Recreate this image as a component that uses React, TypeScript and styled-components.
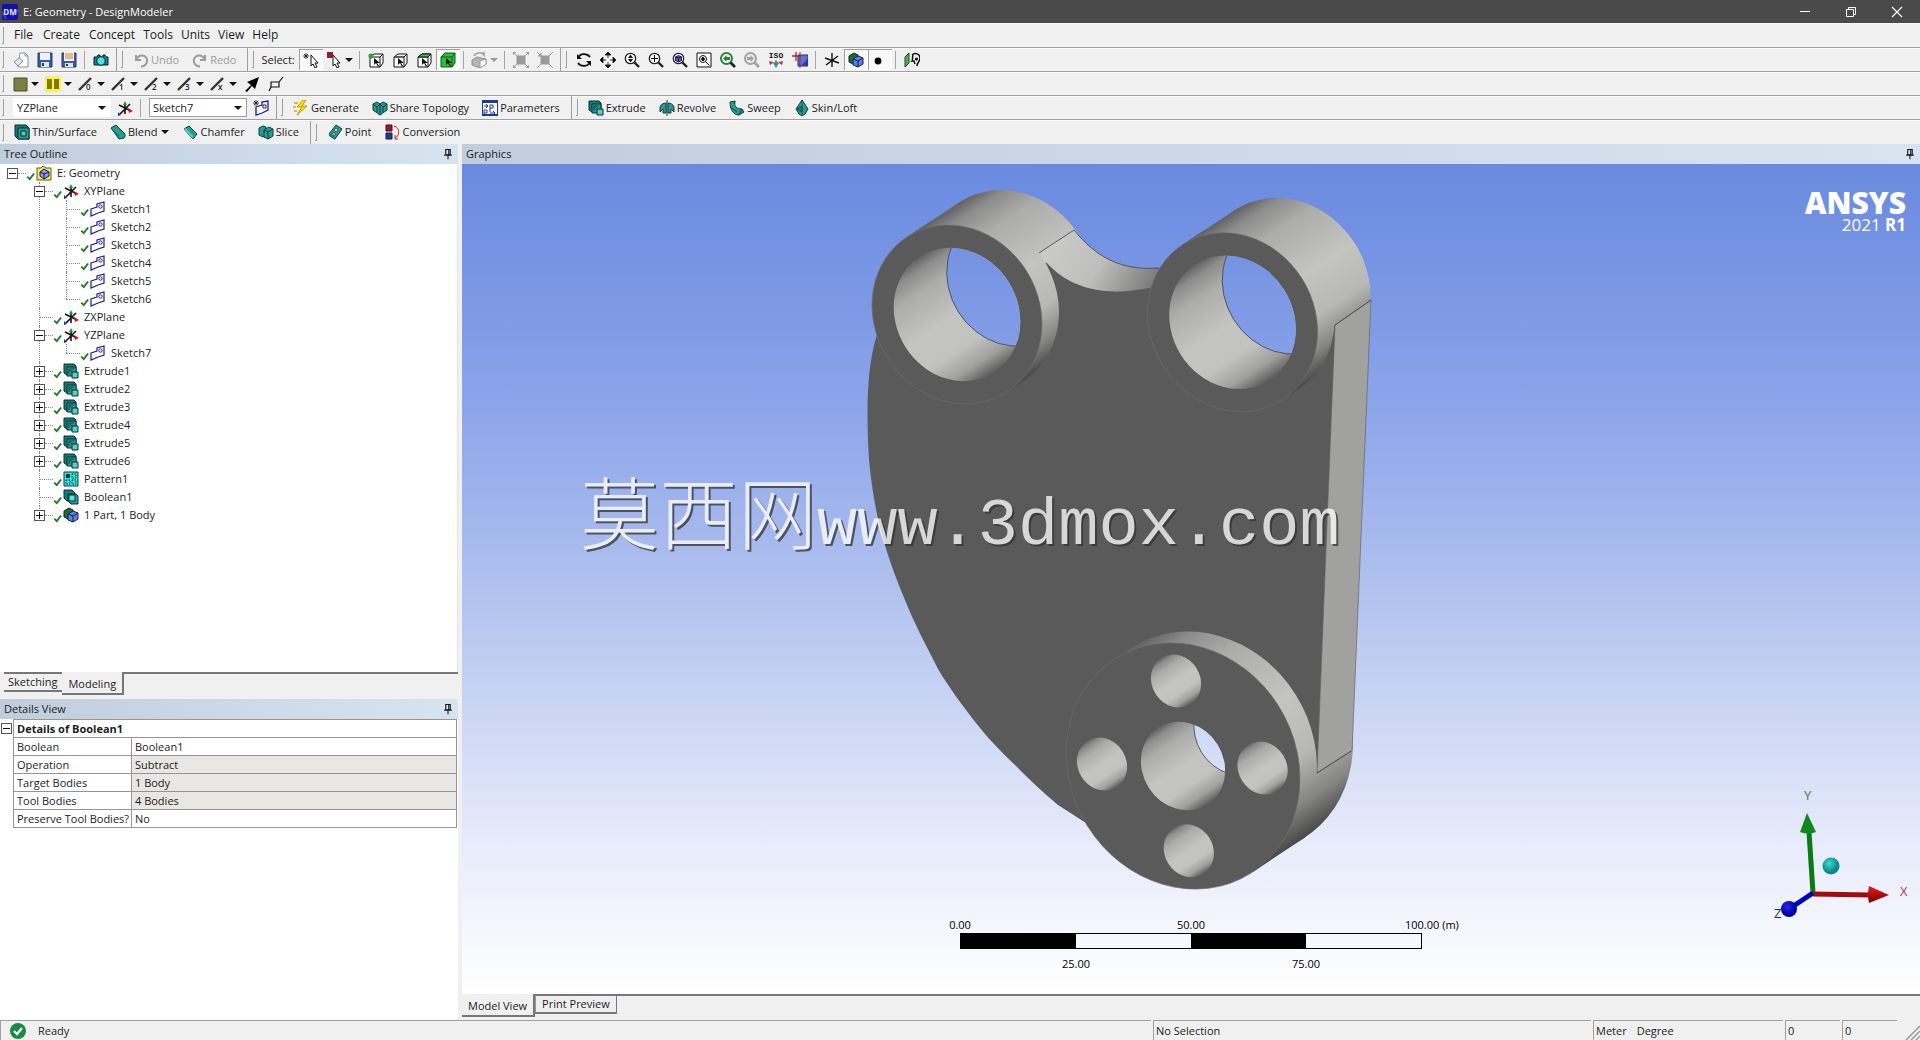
import React from 'react';
import styled, { createGlobalStyle, css } from 'styled-components';

const Global = createGlobalStyle`
  * { box-sizing: border-box; }
  html, body, #root { height: 100%; margin: 0; }
  body { font: 11px/18px "Open Sans", "Noto Sans", "Noto Sans CJK SC", sans-serif; color: #1c1c1c; background: #f0f0f0; overflow: hidden; }
  button, select { font: inherit; color: inherit; }
  ul { list-style: none; margin: 0; padding: 0; }
`;

/* ---------- icons ---------- */

const teal = '#2a9a94';
const deep = '#147a76';
const bright = '#4fd0c8';

const cubeFrame = <path d="M2 5l4-3h9v9l-3 4H2zM2 5h10v10M12 5l3-3" fill="#fff" stroke="#111" />;
const pointer = <path d="M6 6v7l2-2 2 4 1-1-2-3h3z" fill="#111" />;
const lens = (c: string) => (
  <>
    <circle cx="6.500" cy="6.500" r="5.200" fill="#fff" stroke={c} strokeWidth="1.300" />
    <path d="M10.500 10.500L15 15" stroke={c} strokeWidth="2.400" />
  </>
);
const edgeLine = (t: string) => (
  <>
    <path d="M1 14L13 2" stroke="#333" strokeWidth="2.400" />
    <text x="8" y="14" fontSize="8" fontWeight="600" fontFamily="Open Sans, sans-serif" fill="#222">{t}</text>
  </>
);
const extrude = (
  <>
    <path d="M1 1h10l2 2v9H4L1 10z" fill={deep} stroke="#08302f" />
    <path d="M4 4h9v9H4z" fill={teal} stroke="#08302f" />
    <path d="M6 11V6h5" fill="none" stroke="#0b4442" />
    <path d="M9 9h6v6H9z" fill={bright} stroke="#08302f" />
    <path d="M7 7l3 3" stroke="#08302f" />
  </>
);

const icons: Record<string, React.ReactNode> = {
  dm: (
    <>
      <rect width="16" height="16" rx="2" fill="#1212a8" />
      <path d="M0 8l4 7M10 12l6-6" stroke="#2f3fe6" strokeWidth="2" />
      <text x="8" y="11" textAnchor="middle" fontSize="8" fontWeight="700" fontFamily="Open Sans, sans-serif" fill="#dfe3ff">DM</text>
    </>
  ),
  fresh: (
    <>
      <path d="M7 1h5l3 3v11H5z" fill="#fdfdff" stroke="#8a8fa3" />
      <path d="M1 10l5-4 4 3-5 5z" fill="#e3e6f0" stroke="#8a8fa3" /><path d="M12 1v3h3" fill="none" stroke="#8a8fa3" />
    </>
  ),
  save: (
    <>
      <path d="M1 1h14v14H1z" fill="#3b5aa6" stroke="#26386e" />
      <path d="M3 1h10v7H3z" fill="#eef2fb" />
      <path d="M4 10h8v5H4z" fill="#dfe4ee" /><path d="M5 11h2v3H5z" fill="#26386e" />
    </>
  ),
  saveAs: (
    <>
      <path d="M1 1h14v14H1z" fill="#3b5aa6" stroke="#26386e" />
      <path d="M3 0h10v9H3z" fill="#f6efe2" /><path d="M4 2h8M4 4h8M4 6h8" stroke="#c98a4a" />
      <path d="M4 11h8v4H4z" fill="#dfe4ee" /><path d="M5 12h2v2H5z" fill="#26386e" />
    </>
  ),
  camera: (
    <>
      <path d="M1 5h3l1-2h2v2h3V3h2l1 2h2v8H1z" fill="#1c7f86" stroke="#08282b" />
      <circle cx="8" cy="9" r="4.200" fill="#49e3ea" stroke="#08282b" />
    </>
  ),
  undo: <path d="M3 3v5h5M3.500 7.500C5 3 11 2 13.500 6c2 4-1 8.500-5.500 8.500" fill="none" stroke="#9c9c9c" strokeWidth="2" />,
  redo: <path d="M13 3v5H8M12.500 7.500C11 3 5 2 2.500 6c-2 4 1 8.500 5.500 8.500" fill="none" stroke="#9c9c9c" strokeWidth="2" />,
  pick: (
    <>
      <path d="M8 3v11l2-2 2 4 2-1-2-4h3z" fill="#fff" stroke="#111" />
      <path d="M3 1v6M0 4h6M1 2l4 4M5 2L1 6" stroke="#111" strokeWidth=".8" />
    </>
  ),
  pickBox: (
    <>
      <path d="M7 3v11l2-2 2 4 2-1-2-4h3z" fill="#fff" stroke="#111" />
      <path d="M1 0h6v6H1z" fill="#8c1f2d" />
    </>
  ),
  selVertex: <>{cubeFrame}{pointer}<circle cx="3" cy="4" r="2.600" fill="#2fa33a" /></>,
  selEdge: <>{cubeFrame}{pointer}<path d="M2 5l10 0" stroke="#2f6a33" strokeWidth="1.600" /></>,
  selFace: <>{cubeFrame}<path d="M2 5l4-3h9l-3 3z" fill="#3cc94a" stroke="#111" />{pointer}</>,
  selBody: (
    <>
      <path d="M1 5l4-4h10v10l-3 4H1z" fill="#24c436" stroke="#0d5a18" />
      <path d="M1 5h11v10M12 5l3-4" fill="none" stroke="#0d5a18" />{pointer}
    </>
  ),
  greyCube: (
    <>
      <path d="M1 8l5-3 9 2v5l-6 4-8-3z" fill="#b5b5b5" stroke="#8f8f8f" />
      <path d="M9 9l6-2v5l-6 4z" fill="#fff" stroke="#9a9a9a" /><path d="M3 4c2-4 8-4 10-1v-3" fill="none" stroke="#9a9a9a" strokeWidth="1.500" />
    </>
  ),
  expandSel: <path d="M4 4h8v8H4zM0 3V0h3M13 0h3v3M16 13v3h-3M3 16H0v-3M1 1l3 3M15 1l-3 3M15 15l-3-3M1 15l3-3" fill="#9a9a9a" stroke="#9a9a9a" />,
  shrinkSel: <path d="M4 4h8v8H4zM0 0l4 4M16 0l-4 4M16 16l-4-4M0 16l4-4M1 4h3V1" fill="#9a9a9a" stroke="#9a9a9a" />,
  rotate: (
    <>
      <path d="M2 6c2-5 9-5 12-1M14 10c-2 5-9 5-12 1" fill="none" stroke="#111" strokeWidth="1.800" />
      <path d="M1 2v5h5zM15 14V9h-5z" fill="#111" />
    </>
  ),
  pan: <path d="M8 0l3 3H5zM8 16l3-3H5zM0 8l3-3v6zM16 8l-3-3v6zM8 3v3M8 10v3M3 8h3M10 8h3" fill="#111" stroke="#111" strokeWidth=".8" />,
  zoom: <>{lens('#222')}<path d="M6.500 2.500L9 6H4zM6.500 10.500L9 7H4z" fill="#111" /></>,
  boxZoom: <>{lens('#222')}<path d="M6.500 3v7M3 6.500h7" stroke="#111" /></>,
  fit: <>{lens('#222')}<path d="M3.500 5l3-1.500 3 1.500v3.500l-3 1.500-3-1.500z" fill="#5a58b8" stroke="#1a1860" /><path d="M6.500 6v4M3.500 5l3 1 3-1" stroke="#1a1860" fill="none" /></>,
  magnifier: (
    <>
      <path d="M1 1h14v14H1z" fill="#fff" stroke="#111" />
      <circle cx="7" cy="7" r="3.500" fill="none" stroke="#111" /><path d="M9.500 9.500l4 4M7 5l1.500 2h-3zM5.500 7.500h3L7 9z" stroke="#111" />
    </>
  ),
  prevView: (
    <>
      <circle cx="6.500" cy="6.500" r="5.500" fill="#fff" stroke="#2c7f34" strokeWidth="2" />
      <path d="M10.500 10.500L15 15" stroke="#222" strokeWidth="2.600" /><path d="M3 6.500L6.500 3v2H10v3H6.500v2z" fill="#2c7f34" />
    </>
  ),
  nextView: (
    <>
      <circle cx="6.500" cy="6.500" r="5.500" fill="#eee" stroke="#a2a2a2" strokeWidth="2" />
      <path d="M10.500 10.500L15 15" stroke="#a2a2a2" strokeWidth="2.600" /><path d="M10 6.500L6.500 3v2H3v3h3.500v2z" fill="#a2a2a2" />
    </>
  ),
  iso: (
    <>
      <text x="8" y="6" textAnchor="middle" fontSize="8" fontWeight="700" fontFamily="Liberation Mono, monospace" fill="#111">ISO</text>
      <path d="M8 8v4M8 12l-6-3M8 12l6-3" stroke="#b33" strokeDasharray="2 1" /><path d="M5 11l3-2 3 2-3 5z" fill={teal} />
      <path d="M1 9l1 4 3-2zM15 9l-1 4-3-2z" fill="#a33" />
    </>
  ),
  lookAt: (
    <>
      <path d="M6 3h10v11H6z" fill="#5c74d6" stroke="#24306e" /><path d="M9 14l7-8v8z" fill="#2c3f9e" />
      <path d="M4 0v9M0 4h9" stroke="#a32a2a" strokeWidth="1.300" /><path d="M8 0v16" stroke="#a32a2a" />
    </>
  ),
  axes: <path d="M8 1v14M1 6l14 5M2 13l12-9" stroke="#111" strokeWidth="1.400" />,
  solid: (
    <>
      <path d="M1 4l5-3 4 2v6l-5 3-4-2z" fill="#1c6a3a" stroke="#0b2a18" />
      <path d="M5 7l5-3 5 2v6l-5 3-5-2z" fill="#5c7fe0" stroke="#12205c" /><path d="M5 7l5 2 5-3M10 9v6" fill="none" stroke="#12205c" />
    </>
  ),
  dot: <circle cx="6" cy="9" r="3.400" fill="#000" />,
  face: (
    <>
      <path d="M1 5l4-4v10l-4 4z" fill="#4fae54" stroke="#1a4a1c" />
      <path d="M8 3c3-3 8-1 8 3s-3 4-3 8M9 3c-1 3 0 5-1 6h2l1 3" fill="none" stroke="#111" strokeWidth="1.500" /><circle cx="12.500" cy="7" r="1.600" fill="#111" />
    </>
  ),
  swatch: <path d="M2 2h13v13H2z" fill="#7b7f45" stroke="#4c4f1e" />,
  swatch2: (
    <>
      <path d="M0 0h16v16H0z" fill="#fbf25a" />
      <path d="M2 3h5v10H2zM9 3h5v10H9z" fill="#7f7a00" />
    </>
  ),
  edge0: edgeLine('0'), edge1: edgeLine('1'), edge2: edgeLine('2'), edge3: edgeLine('3'), edgeX: edgeLine('x'),
  bigArrow: <path d="M1 15l6-6-4-3L15 1l-4 12-3-3-5 6z" fill="#000" />,
  flag: <path d="M1 15l2-4V6h8v5H3M11 6l4-5" fill="none" stroke="#111" strokeWidth="1.200" />,
  newPlane: (
    <>
      <path d="M8 14V4M2 5l12 6M3 14L13 4" stroke="#111" strokeWidth="1.600" />
      <path d="M6 5l2-4 2 4z" fill="#1b9a2e" /><path d="M11 8l5 3-4 2z" fill="#c02020" /><path d="M1 12l3 3-3 1z" fill="#22c" />
    </>
  ),
  newSketch: (
    <>
      <path d="M3 7l6-2V2l6-1v9l-6 3-6 2z" fill="#fff" stroke="#1c1c8c" strokeWidth="1.300" /><path d="M10 5h3v3h-3z" fill="none" stroke="#1c1c8c" />
      <path d="M3 0v6M0 3h6M1 1l4 4M5 1L1 5" stroke="#111" strokeWidth=".8" />
    </>
  ),
  generate: (
    <>
      <path d="M10 0L4 7h5l-5 8 10-9H9l4-6z" fill="#ffe000" stroke="#a08a00" strokeWidth=".8" />
      <path d="M1 3h4M0 7h3M1 11h3" stroke="#c9b400" strokeWidth="1.400" />
    </>
  ),
  share: (
    <>
      <path d="M1 4l4-2 3 2 3-2 4 2v6l-7 5-7-5z" fill={teal} stroke="#0b3f3d" />
      <path d="M1 4l4 3 3-3 3 3 4-3M8 4v11M5 7v5M11 7v5" fill="none" stroke="#0b3f3d" />
    </>
  ),
  params: (
    <>
      <path d="M0 1h16v14H0z" fill="#fff" stroke="#1d3a94" strokeWidth="2" /><path d="M0 1h16v2H0z" fill="#1d3a94" />
      <path d="M2 6h3M4 4l2 2-2 2M8 12V5h3v3H8M2 15v-5h3v3H2M8 13h5M11 11l2 2-2 2" fill="none" stroke="#1d3a94" />
    </>
  ),
  extrude,
  revolve: (
    <>
      <path d="M1 7c1-3 4-4 6-4v10H4V9L1 12zM15 7c-1-3-4-4-6-4v10h3V9l3 3z" fill={teal} stroke="#0b3f3d" />
      <path d="M8 0v16" stroke="#0b3f3d" />
    </>
  ),
  sweep: <path d="M1 2l5-1c-1 5 1 8 7 8l2 3-5 3C4 15 1 9 1 2zM6 1l-1 3M13 9l-3 6M3 8l5 4" fill={teal} stroke="#0b3f3d" />,
  loft: <><path d="M8 0l6 9-3 5-3 2-3-2-3-5z" fill={teal} stroke="#0b3f3d" /><path d="M8 0v16M8 6l-6 3 6 3z" fill={deep} stroke="#0b3f3d" strokeWidth=".6" /></>,
  thin: (
    <>
      <path d="M1 1h11l3 3v11H4l-3-3z" fill={deep} stroke="#08302f" />
      <path d="M4 4h11v11H4z" fill={teal} stroke="#08302f" /><path d="M7 7h5v5H7z" fill="#5fc4c0" stroke="#08302f" />
    </>
  ),
  blend: <><path d="M1 4l5-3 8 8c2 2 1 4 0 5l-5 1z" fill={teal} stroke="#0b3f3d" /><path d="M1 4l8 11v-4z" fill={deep} /></>,
  chamfer: <><path d="M2 5l5-3 8 8-4 5z" fill={teal} stroke="#0b3f3d" /><path d="M2 5l9 10v-3L4 4z" fill={bright} /></>,
  slice: (
    <>
      <path d="M1 4l4-2 3 1v8l-3 2-4-2z" fill={teal} stroke="#0b3f3d" />
      <path d="M6 6l5-3 4 2v7l-5 3-4-2z" fill={teal} stroke="#0b3f3d" /><path d="M6 6l4 2 5-3M10 8v7" fill="none" stroke="#0b3f3d" />
    </>
  ),
  point: (
    <>
      <path d="M2 10L9 1l6 4-7 10z" fill={teal} stroke="#0b3f3d" /><path d="M2 10l6 3v3l-6-4z" fill={deep} />
      <circle cx="9" cy="6" r="1.500" fill="#fff" stroke="#111" strokeWidth=".6" /><circle cx="7" cy="10" r="1.300" fill="#fff" stroke="#111" strokeWidth=".6" />
    </>
  ),
  conversion: (
    <>
      <path d="M1 1h6v6H1z" fill="#8c1f2d" stroke="#4a0d16" /><path d="M1 9h6v6H1z" fill="#1f3f8c" stroke="#0d1c4a" />
      <path d="M9 2c6 1 6 10 1 12M10 11v4h3" fill="none" stroke="#c22" />
    </>
  ),
  project: (
    <>
      <path d="M1 3h4l2-2 3 2h5v12H1z" fill="#f5e46a" stroke="#6b5b10" />
      <path d="M4 7l4-3 5 3v4l-5 3-4-3z" fill="#8d9be0" stroke="#161a4a" /><path d="M4 7l4 2 5-2M8 9v5" fill="none" stroke="#161a4a" />
    </>
  ),
  sketch: (
    <>
      <path d="M1 8l6-2V3l7-2v9l-6 2-7 3z" fill="#fff" stroke="#1c1c8c" strokeWidth="1.200" />
      <circle cx="10.500" cy="5.500" r="1.700" fill="none" stroke="#1c1c8c" />
    </>
  ),
  pattern: (
    <>
      <path d="M1 1h14v14H1z" fill="#3fe0e0" stroke="#063c3c" /><path d="M3 3h4v4H3z" fill="#063c3c" />
      <path d="M9 3h4v4H9zM3 9h4v4H3zM9 9h4v4H9z" fill="none" stroke="#063c3c" strokeDasharray="1.500 1" />
    </>
  ),
  boolean: (
    <>
      <path d="M1 1h8l3 3v8H4L1 9z" fill={deep} stroke="#08302f" /><path d="M5 5h8l2 2v8H8l-3-3z" fill={teal} stroke="#08302f" />
      <path d="M6 6h6v6H6z" fill="#5be3dc" stroke="#08302f" />
    </>
  ),
  check: <path d="M2 9l4 4 7-9" fill="none" stroke="#1f7a26" strokeWidth="3" />,
  pin: <path d="M5 2h6v7H5zM9 2v7M3 9.500h10M8 10v5" fill="none" stroke="#111" strokeWidth="1.400" />,
  ready: (
    <>
      <circle cx="8" cy="8" r="8" fill="#1b8a43" /><path d="M4 8l3 3 5-6" fill="none" stroke="#fff" strokeWidth="2.200" />
    </>
  ),
  minimize: <path d="M3 7.500h10" stroke="#fff" />,
  restore: <path d="M3.500 5.500h7v7h-7zM5.500 5.500v-2h7v7h-2" fill="none" stroke="#fff" />,
  close: <path d="M3 3l10 10M13 3L3 13" stroke="#fff" strokeWidth="1.200" />,
};

const Glyph = styled.svg<{ $size?: number }>`
  display: block;
  flex: none;
  width: ${p => p.$size ?? 16}px;
  height: ${p => p.$size ?? 16}px;
`;
const Icon = ({ name, size }: { name: string; size?: number }) => (
  <Glyph viewBox="0 0 16 16" $size={size} aria-hidden="true">{icons[name]}</Glyph>
);

/* ---------- window frame ---------- */

const Window = styled.div`
  display: flex;
  flex-direction: column;
  height: 100vh;
`;
const TitleBar = styled.header`
  display: flex;
  align-items: center;
  gap: 5px;
  height: 23px;
  padding-left: 2px;
  background: #4a4a4a;
  color: #fff;
`;
const Title = styled.h1`
  flex: 1;
  margin: 0;
  font-size: 11px;
  font-weight: 400;
`;
const WindowButtons = styled.div`
  display: flex;
`;
const WindowButton = styled.button`
  display: grid;
  place-items: center;
  width: 46px;
  height: 20px;
  padding: 0;
  border: 0;
  background: none;
`;

const Bar = styled.div<{ $last?: boolean }>`
  display: flex;
  align-items: center;
  height: 24px;
  background: #f0f0f0;
  border-bottom: ${p => (p.$last ? '0' : '1px solid #a0a0a0')};
  box-shadow: inset 0 1px #fafafa;
`;
const MenuBar = styled(Bar)`
  height: 25px;
`;
const Group = styled.div<{ $open?: boolean }>`
  display: flex;
  align-items: center;
  height: 23px;
  margin-right: 2px;
  padding-right: 3px;
  border-right: ${p => (p.$open ? '0' : '1px solid #a0a0a0')};
`;
const Grip = styled.span`
  width: 2px;
  height: 17px;
  margin: 0 5px 0 2px;
  border-right: 1px solid #a0a0a0;
  border-bottom: 1px solid #a0a0a0;
`;
const Rule = styled.span`
  width: 1px;
  height: 18px;
  margin: 0 4px 0 3px;
  background: #a6a6a6;
`;
const MenuButton = styled.button`
  padding: 0 5px;
  border: 0;
  background: none;
  font-size: 12px;
  &:nth-of-type(n + 3) { padding: 0 4px; }
`;
const ToolButton = styled.button<{ $on?: boolean; $wide?: boolean }>`
  display: flex;
  align-items: center;
  justify-content: center;
  gap: 3px;
  width: ${p => (p.$wide ? 33 : 24)}px;
  height: 21px;
  padding: 0;
  border: 0;
  background: none;
  ${p => p.$on && css`
    background: #f9f9f9;
    box-shadow: inset 1px 1px #a0a0a0, inset -1px -1px #fff;
  `}
`;
const TextButton = styled.button<{ $dim?: boolean }>`
  display: flex;
  align-items: center;
  gap: 2px;
  height: 21px;
  padding: 0 8px 0 5px;
  border: 0;
  background: none;
  white-space: nowrap;
  color: ${p => (p.$dim ? '#9c9c9c' : '#1c1c1c')};
`;
const Caret = styled.span<{ $dim?: boolean }>`
  flex: none;
  border: 4px solid transparent;
  border-top-color: ${p => (p.$dim ? '#9a9a9a' : '#111')};
  border-bottom: 0;
`;
const SelectLabel = styled.span`
  padding: 0 4px 0 2px;
`;
const Picker = styled.label<{ $framed?: boolean }>`
  display: flex;
  align-items: center;
  width: 98px;
  height: 19px;
  margin: 0 2px 0 4px;
  padding-right: 4px;
  background: #fff;
  border: ${p => (p.$framed ? '1px solid #a0a0a0' : '1px solid #fff')};
  select {
    flex: 1;
    min-width: 0;
    height: 17px;
    padding: 0 3px;
    border: 0;
    outline: 0;
    appearance: none;
    background: #fff;
    font-size: 11px;
    line-height: 17px;
  }
`;

type Tool = { icon: string; name: string; drop?: boolean; on?: boolean; dim?: boolean };
const Tools = ({ items }: { items: (Tool | '|')[] }) => (
  <>
    {items.map((t, i) =>
      t === '|' ? <Rule key={i} /> : (
        <ToolButton key={i} type="button" aria-label={t.name} $on={t.on} $wide={t.drop}>
          <Icon name={t.icon} />
          {t.drop && <Caret $dim={t.dim} />}
        </ToolButton>
      ))}
  </>
);
const Actions = ({ items }: { items: { icon: string; name: string; drop?: boolean; dim?: boolean }[] }) => (
  <>
    {items.map(t => (
      <TextButton key={t.name} type="button" $dim={t.dim} disabled={t.dim}>
        <Icon name={t.icon} />
        {t.name}
        {t.drop && <><span /><Caret /></>}
      </TextButton>
    ))}
  </>
);

/* ---------- panels ---------- */

const Workspace = styled.main`
  flex: 1;
  display: flex;
  gap: 4px;
  min-height: 0;
`;
const Side = styled.aside`
  display: flex;
  flex-direction: column;
  width: 458px;
`;
const PanelHead = styled.h2`
  display: flex;
  align-items: center;
  justify-content: space-between;
  flex: none;
  height: 20px;
  margin: 0;
  padding: 0 4px;
  font-size: 11px;
  font-weight: 400;
  background: linear-gradient(90deg, #bfcddd, #d6e4f2);
`;
const TreeBox = styled.div`
  flex: none;
  height: 508px;
  background: #fff;
  border-right: 1px solid #e3e3e3;
`;
const Branch = styled.ul`
  ul { margin-left: 27px; }
`;
const Leaf = styled.li<{ $root?: boolean }>`
  position: relative;
  ${p => !p.$root && css`
    &::before {
      content: '';
      position: absolute;
      top: 0;
      left: 12px;
      height: 100%;
      border-left: 1px dotted #888;
    }
    &:last-child::before { height: 9px; }
  `}
`;
const LeafRow = styled.div`
  display: flex;
  align-items: center;
  height: 18px;
`;
const Twig = styled.span<{ $box?: boolean }>`
  flex: none;
  width: 26px;
  display: flex;
  align-items: center;
  padding-left: ${p => (p.$box ? 7 : 12)}px;
  &::after { content: ''; flex: 1; border-top: 1px dotted #888; }
`;
const Expander = styled.button`
  position: relative;
  display: grid;
  place-items: center;
  width: 11px;
  height: 11px;
  padding: 0;
  border: 1px solid #555;
  background: #fff;
  svg { display: block; }
`;
const Tick = styled.span`
  width: 10px;
  padding-top: 6px;
`;
const LeafName = styled.span`
  padding-left: 5px;
`;
const PlusMinus = ({ open }: { open: boolean }) => (
  <svg width="9" height="9" viewBox="0 0 9 9" aria-hidden="true"><path d={open ? 'M1 4.500h7' : 'M1 4.500h7M4.500 1v7'} stroke="#111" /></svg>
);

type Node = { name: string; icon: string; kids?: Node[] };
const tree: Node = {
  name: 'E: Geometry', icon: 'project', kids: [
    { name: 'XYPlane', icon: 'newPlane', kids: [1, 2, 3, 4, 5, 6].map(n => ({ name: `Sketch${n}`, icon: 'sketch' })) },
    { name: 'ZXPlane', icon: 'newPlane' },
    { name: 'YZPlane', icon: 'newPlane', kids: [{ name: 'Sketch7', icon: 'sketch' }] },
    ...[1, 2, 3, 4, 5, 6].map(n => ({ name: `Extrude${n}`, icon: 'extrude', kids: [] })),
    { name: 'Pattern1', icon: 'pattern' },
    { name: 'Boolean1', icon: 'boolean' },
    { name: '1 Part, 1 Body', icon: 'solid', kids: [] },
  ],
};
const TreeNode = ({ node, root }: { node: Node; root?: boolean }) => {
  const open = !!node.kids?.length;
  return (
    <Leaf $root={root}>
      <LeafRow>
        <Twig $box={!!node.kids}>
          {node.kids && (
            <Expander type="button" aria-label={open ? 'Collapse' : 'Expand'}><PlusMinus open={open} /></Expander>
          )}
        </Twig>
        <Tick><Icon name="check" size={10} /></Tick>
        <Icon name={node.icon} />
        <LeafName>{node.name}</LeafName>
      </LeafRow>
      {open && <ul>{node.kids!.map(k => <TreeNode key={k.name} node={k} />)}</ul>}
    </Leaf>
  );
};

const TabStrip = styled.div<{ $side?: boolean }>`
  display: flex;
  align-items: flex-start;
  flex: none;
  height: ${p => (p.$side ? 27 : 26)}px;
  padding-left: ${p => (p.$side ? 4 : 0)}px;
  &::after { content: ''; flex: 1; border-top: 2px solid #777; }
`;
const Tab = styled.button<{ $active?: boolean }>`
  height: ${p => (p.$active ? 23 : 20)}px;
  padding: ${p => (p.$active ? '3px 6px 0' : '0 6px')};
  border: 0 solid #777;
  border-width: ${p => (p.$active ? '0 2px 2px 0' : '2px 1px 2px 0')};
  border-left: ${p => (p.$active ? '0' : '1px solid #999')};
  background: #f0f0f0;
  line-height: 16px;
  white-space: nowrap;
`;
const SketchTab = styled(Tab)`
  padding: 0 5px 0 4px;
  border-left: 0;
  border-right: 0;
`;

const Details = styled.div`
  flex: 1;
  background: #fff;
`;
const DetailsRow = styled.div`
  display: flex;
  align-items: flex-start;
`;
const Gutter = styled.div`
  flex: none;
  width: 13px;
  padding: 4px 0 0 1px;
`;
const Table = styled.table`
  width: 100%;
  border-collapse: collapse;
  table-layout: fixed;
  margin-right: 1px;
  th, td {
    height: 18px;
    padding: 0 3px;
    border: 1px solid #959595;
    line-height: 17px;
    text-align: left;
    font-weight: 400;
    white-space: nowrap;
  }
  thead th { font-weight: 700; }
`;
const NameCol = styled.col`
  width: 118px;
`;
const Value = styled.td<{ $shade?: boolean }>`
  background: ${p => (p.$shade ? '#e8e7e3' : '#fff')};
`;
const details: [string, string, boolean][] = [
  ['Boolean', 'Boolean1', false],
  ['Operation', 'Subtract', true],
  ['Target Bodies', '1 Body', true],
  ['Tool Bodies', '4 Bodies', true],
  ['Preserve Tool Bodies?', 'No', false],
];

/* ---------- graphics view ---------- */

const View = styled.section`
  flex: 1;
  display: flex;
  flex-direction: column;
  min-width: 0;
`;
const Canvas = styled.div`
  position: relative;
  flex: 1;
  min-height: 0;
  overflow: hidden;
  background: linear-gradient(#698adf, #8da5ea 30%, #b9c8f0 56%, #e4e9fa 80%, #fff);
`;
const Model = styled.svg`
  display: block;
  width: 100%;
  height: 100%;
`;
const Watermark = styled.div`
  position: absolute;
  left: 118px;
  top: 50%;
  display: flex;
  align-items: baseline;
  margin-top: -114px;
  color: #fff;
  opacity: 0.76;
  line-height: 90px;
  white-space: nowrap;
  text-shadow: 2px 2px 0 #333;
`;
const Han = styled.span`
  font-family: "Noto Sans CJK SC", sans-serif;
  font-size: 79px;
  font-weight: 300;
`;
const Latin = styled.span`
  font-family: "Liberation Mono", monospace;
  font-size: 67px;
`;
const Brand = styled.div`
  position: absolute;
  top: 23px;
  right: 14px;
  color: #fff;
  text-align: right;
`;
const BrandName = styled.div`
  font-size: 30px;
  font-weight: 800;
  line-height: 31px;
`;
const Release = styled.div`
  font-size: 17px;
  line-height: 14px;
`;
const Scale = styled.div`
  position: absolute;
  bottom: 22px;
  left: 50%;
  width: 462px;
  margin-left: -231px;
  font-size: 11px;
  line-height: 16px;
  color: #000;
`;
const Marks = styled.div<{ $inset?: boolean }>`
  display: flex;
  justify-content: space-between;
  height: 16px;
  padding: 0 ${p => (p.$inset ? 116 : 0)}px;
`;
const Mark = styled.span`
  display: flex;
  justify-content: center;
  width: 0;
  white-space: pre;
`;
const EndMark = styled(Mark)`
  justify-content: flex-start;
  text-indent: -17px;
`;
const Blocks = styled.div`
  display: grid;
  grid-template-columns: repeat(4, 1fr);
  height: 16px;
  margin-bottom: 7px;
  border: 1px solid #000;
  span:nth-child(odd) { background: #000; }
`;
const Triad = styled.svg`
  position: absolute;
  right: 4px;
  bottom: 68px;
  width: 144px;
  height: 144px;
  font-family: "Open Sans", sans-serif;
  font-size: 13px;
`;

const ring = { rx: 92.2, ry: 82 };
const bore = { rx: 68.8, ry: 61 };
const tilt = 58;
const cos = Math.cos((tilt * Math.PI) / 180);
const sin = Math.sin((tilt * Math.PI) / 180);
const oval = (x: number, y: number, rx: number, ry: number) => {
  const ax = rx * cos;
  const ay = rx * sin;
  return `M${x - ax} ${y - ay}A${rx} ${ry} ${tilt} 1 1 ${x + ax} ${y + ay}A${rx} ${ry} ${tilt} 1 1 ${x - ax} ${y - ay}z`;
};
const Oval = ({ x, y, rx, ry, ...rest }: { x: number; y: number; rx: number; ry: number } & React.SVGProps<SVGPathElement>) => (
  <path d={oval(x, y, rx, ry)} {...rest} />
);
/* Outer wall of a boss, from its front ring back along the extrusion direction. */
const Wall = ({ x, y, k, dx, dy, fill }: { x: number; y: number; k: number; dx: number; dy: number; fill: string }) => {
  const tx = 50.4 * k;
  const ty = 77.2 * k;
  return (
    <g fill={fill}>
      <Oval x={x + dx} y={y + dy} rx={ring.rx * k} ry={ring.ry * k} />
      <path d={`M${x - tx} ${y - ty}l${dx} ${dy}L${x + tx + dx} ${y + ty + dy}l${-dx} ${-dy}z`} />
    </g>
  );
};
/* Shading runs square to the extrusion direction. */
const Shade = ({ id, x, y, r, inner }: { id: string; x: number; y: number; r: number; inner?: boolean }) => (
  <linearGradient id={id} gradientUnits="userSpaceOnUse" x1={x - 0.551 * r} y1={y - 0.835 * r} x2={x + 0.551 * r} y2={y + 0.835 * r}>
    <stop offset="0" stopColor="#626262" />
    <stop offset=".08" stopColor="#8c8c8c" />
    <stop offset=".22" stopColor="#acacab" />
    <stop offset=".5" stopColor="#c4c4c3" />
    <stop offset=".72" stopColor={inner ? '#c2c2c1' : '#b8b8b7'} />
    <stop offset=".88" stopColor={inner ? '#a0a09f' : '#858584'} />
    <stop offset="1" stopColor={inner ? '#5c5c5c' : '#484848'} />
  </linearGradient>
);

const bosses = [
  { id: 'a', x: 957, y: 314.5, k: 1, h: bore },
  { id: 'b', x: 1232.5, y: 322.3, k: 1, h: bore },
  { id: 'c', x: 1183, y: 766, k: 1.376, h: { rx: 45.6, ry: 40.6 } },
];
const bolts = [[1102, 764], [1176, 681], [1262.6, 768], [1188.8, 850.7]];
const metal = '#5a5a5a';

const Part = () => (
  <Model viewBox="462 164 1458 830" role="img" aria-label="Bracket">
    <defs>
      {bosses.map(b => <Shade key={b.id} id={`wall-${b.id}`} x={b.x} y={b.y} r={92.2 * b.k} />)}
      {bosses.map(b => <Shade key={b.id} id={`bore-${b.id}`} x={b.x} y={b.y} r={b.h.rx} inner />)}
      {bolts.map(([x, y], i) => <Shade key={i} id={`bolt-${i}`} x={x} y={y} r={27.3} inner />)}
      <linearGradient id="saddle" gradientUnits="userSpaceOnUse" x1="1060" y1="230" x2="1160" y2="290">
        <stop offset="0" stopColor="#cacac9" /><stop offset=".45" stopColor="#bebebd" /><stop offset="1" stopColor="#707070" />
      </linearGradient>
      {bosses.map(b => (
        <clipPath key={b.id} id={`clip-${b.id}`}><Oval x={b.x} y={b.y} {...b.h} /></clipPath>
      ))}
      <mask id="through" maskUnits="userSpaceOnUse" x="462" y="164" width="1458" height="830">
        <rect x="462" y="164" width="1458" height="830" fill="#fff" />
        {bosses.map(b => (
          <g key={b.id} clipPath={`url(#clip-${b.id})`}><Oval x={b.x + 53} y={b.y - 35} {...b.h} fill="#000" /></g>
        ))}
      </mask>
    </defs>
    <g mask="url(#through)">
      {bosses.map(b => <Wall key={b.id} x={b.x} y={b.y} k={b.k} dx={53} dy={-35} fill={`url(#wall-${b.id})`} />)}
      <path d="M1335 325L1371 300L1352 751L1317 773z" fill="#a1a1a0" stroke="#666" strokeWidth=".7" />
      <path d="M877 335C867 365 866 410 869 460C874 510 882 545 905 600C914 623 926 645 938 669C948 686 962 705 976 723C986 736 1000 751 1015 765C1028 778 1042 792 1058 805L1086 823L1183 880L1317 773L1335 325L1232 260L1152 285C1125 295 1080 297 1048 262L957 300z" fill={metal} />
      <path d="M1037 254L1074 230C1095 256 1120 271 1161 268L1164 284C1120 297 1075 295 1046 262z" fill="url(#saddle)" />
      {bosses.map(b => (
        <React.Fragment key={b.id}>
          <Wall x={b.x} y={b.y} k={b.k} dx={17} dy={-11.5} fill={`url(#wall-${b.id})`} />
          <Oval x={b.x} y={b.y} rx={ring.rx * b.k} ry={ring.ry * b.k} fill={metal} stroke="#6c6c6c" strokeWidth=".7" />
          <Oval x={b.x} y={b.y} {...b.h} fill={`url(#bore-${b.id})`} />
        </React.Fragment>
      ))}
      {bolts.map(([x, y], i) => <Oval key={i} x={x} y={y} rx={27.3} ry={24.2} fill={`url(#bolt-${i})`} />)}
    </g>
    <g fill="none" stroke="#4c4c4c" strokeWidth=".9">
      <path d="M1039 253L1074 230C1095 256 1120 271 1159 268M1335 325L1371 300M1317 773L1351 751" />
      {bosses.map(b => (
        <g key={b.id} clipPath={`url(#clip-${b.id})`}><Oval x={b.x + 53} y={b.y - 35} {...b.h} /></g>
      ))}
    </g>
  </Model>
);

const AxisTriad = () => (
  <Triad viewBox="1772 782 144 144" role="img" aria-label="Axes">
    <defs>
      <radialGradient id="ball" cx=".4" cy=".35"><stop offset="0" stopColor="#3fd9d0" /><stop offset="1" stopColor="#088a86" /></radialGradient>
      <radialGradient id="knob" cx=".4" cy=".35"><stop offset="0" stopColor="#2a2af0" /><stop offset="1" stopColor="#0000a0" /></radialGradient>
      <linearGradient id="red" x1="0" y1="0" x2="0" y2="1"><stop offset="0" stopColor="#e02020" /><stop offset="1" stopColor="#800000" /></linearGradient>
    </defs>
    <path d="M1813 893L1809 832" stroke="#0a7a14" strokeWidth="5" />
    <path d="M1807 813l9 19q-8 3-16 0z" fill="#0f8a1a" />
    <path d="M1813 894L1870 895" stroke="#a00d0d" strokeWidth="5" />
    <path d="M1889 895l-20-9q-2 9 0 17z" fill="url(#red)" />
    <path d="M1813 893L1789 909" stroke="#0000b8" strokeWidth="5" />
    <circle cx="1831" cy="866" r="8.500" fill="url(#ball)" />
    <text x="1774" y="918" fill="#222a66">Z</text>
    <circle cx="1789" cy="909" r="8" fill="url(#knob)" />
    <text x="1804" y="800" fill="#2a8a3a">Y</text>
    <text x="1900" y="896" fill="#c8323c">X</text>
  </Triad>
);

/* ---------- status bar ---------- */

const Status = styled.footer`
  display: flex;
  gap: 2px;
  flex: none;
  height: 20px;
`;
const Cell = styled.div<{ $width?: number }>`
  display: flex;
  align-items: center;
  gap: 10px;
  flex: ${p => (p.$width ? `0 0 ${p.$width}px` : '1')};
  padding-left: 2px;
  border-top: 1px solid #a0a0a0;
  border-left: 1px solid #a0a0a0;
`;
const ReadyCell = styled(Cell)`
  gap: 12px;
  padding-left: 9px;
`;
const Corner = styled.svg`
  flex: none;
  align-self: flex-end;
  width: 21px;
  height: 16px;
`;

const menus = ['File', 'Create', 'Concept', 'Tools', 'Units', 'View', 'Help'];

export default function App() {
  return (
    <Window>
      <Global />
      <TitleBar>
        <Icon name="dm" />
        <Title>E: Geometry - DesignModeler</Title>
        <WindowButtons>
          <WindowButton type="button" aria-label="Minimize"><Icon name="minimize" /></WindowButton>
          <WindowButton type="button" aria-label="Restore"><Icon name="restore" /></WindowButton>
          <WindowButton type="button" aria-label="Close"><Icon name="close" /></WindowButton>
        </WindowButtons>
      </TitleBar>

      <MenuBar as="nav">
        <Grip />
        {menus.map(m => <MenuButton key={m} type="button">{m}</MenuButton>)}
      </MenuBar>

      <Bar>
        <Group>
          <Grip />
          <Tools items={[
            { icon: 'fresh', name: 'New' }, { icon: 'save', name: 'Save' }, { icon: 'saveAs', name: 'Export' }, '|',
            { icon: 'camera', name: 'Image capture' },
          ]} />
        </Group>
        <Group>
          <Grip />
          <Actions items={[{ icon: 'undo', name: 'Undo', dim: true }, { icon: 'redo', name: 'Redo', dim: true }]} />
        </Group>
        <Group>
          <Grip />
          <SelectLabel>Select:</SelectLabel>
          <Tools items={[
            { icon: 'pick', name: 'New selection', on: true }, { icon: 'pickBox', name: 'Select mode', drop: true }, '|',
            { icon: 'selVertex', name: 'Points' }, { icon: 'selEdge', name: 'Edges' }, { icon: 'selFace', name: 'Faces' },
            { icon: 'selBody', name: 'Bodies', on: true }, '|',
            { icon: 'greyCube', name: 'Extend selection', drop: true, dim: true }, '|',
            { icon: 'expandSel', name: 'Expand' }, { icon: 'shrinkSel', name: 'Shrink' },
          ]} />
        </Group>
        <Group $open>
          <Grip />
          <Tools items={[
            { icon: 'rotate', name: 'Rotate' }, { icon: 'pan', name: 'Pan' }, { icon: 'zoom', name: 'Zoom' },
            { icon: 'boxZoom', name: 'Box zoom' }, { icon: 'fit', name: 'Zoom to fit' }, { icon: 'magnifier', name: 'Magnifier' },
            { icon: 'prevView', name: 'Previous view' }, { icon: 'nextView', name: 'Next view' }, { icon: 'iso', name: 'Isometric view' },
            { icon: 'lookAt', name: 'Look at' }, '|', { icon: 'axes', name: 'Display plane' },
            { icon: 'solid', name: 'Display model', on: true }, { icon: 'dot', name: 'Display points', on: true }, '|',
            { icon: 'face', name: 'Look at face' },
          ]} />
        </Group>
      </Bar>

      <Bar>
        <Grip />
        <Tools items={[
          { icon: 'swatch', name: 'Face colour', drop: true }, { icon: 'swatch2', name: 'Edge colour', drop: true },
          { icon: 'edge0', name: 'Free edges', drop: true }, { icon: 'edge1', name: 'Single edges', drop: true },
          { icon: 'edge2', name: 'Double edges', drop: true }, { icon: 'edge3', name: 'Triple edges', drop: true },
          { icon: 'edgeX', name: 'Multiple edges', drop: true }, { icon: 'bigArrow', name: 'Edge direction' }, { icon: 'flag', name: 'Display vertices' },
        ]} />
      </Bar>

      <Bar>
        <Group>
          <Grip />
          <Picker>
            <select aria-label="Active plane" defaultValue="YZPlane"><option>XYPlane</option><option>ZXPlane</option><option>YZPlane</option></select>
            <Caret />
          </Picker>
          <Tools items={[{ icon: 'newPlane', name: 'New plane' }, '|']} />
          <Picker $framed>
            <select aria-label="Active sketch" defaultValue="Sketch7"><option>Sketch7</option></select>
            <Caret />
          </Picker>
          <Tools items={[{ icon: 'newSketch', name: 'New sketch' }]} />
        </Group>
        <Group>
          <Grip />
          <Actions items={[
            { icon: 'generate', name: 'Generate' }, { icon: 'share', name: 'Share Topology' }, { icon: 'params', name: 'Parameters' },
          ]} />
        </Group>
        <Group $open>
          <Grip />
          <Actions items={[
            { icon: 'extrude', name: 'Extrude' }, { icon: 'revolve', name: 'Revolve' }, { icon: 'sweep', name: 'Sweep' }, { icon: 'loft', name: 'Skin/Loft' },
          ]} />
        </Group>
      </Bar>

      <Bar $last>
        <Group>
          <Grip />
          <Actions items={[
            { icon: 'thin', name: 'Thin/Surface' }, { icon: 'blend', name: 'Blend', drop: true },
            { icon: 'chamfer', name: 'Chamfer' }, { icon: 'slice', name: 'Slice' },
          ]} />
        </Group>
        <Group $open>
          <Grip />
          <Actions items={[{ icon: 'point', name: 'Point' }, { icon: 'conversion', name: 'Conversion' }]} />
        </Group>
      </Bar>

      <Workspace>
        <Side>
          <PanelHead>Tree Outline<Icon name="pin" size={12} /></PanelHead>
          <TreeBox><Branch><TreeNode node={tree} root /></Branch></TreeBox>
          <TabStrip $side>
            <SketchTab type="button">Sketching</SketchTab>
            <Tab type="button" $active>Modeling</Tab>
          </TabStrip>
          <PanelHead>Details View<Icon name="pin" size={12} /></PanelHead>
          <Details>
            <DetailsRow>
              <Gutter><Expander type="button" aria-label="Collapse"><PlusMinus open /></Expander></Gutter>
              <Table>
                <colgroup><NameCol /><col /></colgroup>
                <thead><tr><th colSpan={2}>Details of Boolean1</th></tr></thead>
                <tbody>
                  {details.map(([k, v, shade]) => (
                    <tr key={k}><th scope="row">{k}</th><Value $shade={shade}>{v}</Value></tr>
                  ))}
                </tbody>
              </Table>
            </DetailsRow>
          </Details>
        </Side>

        <View>
          <PanelHead>Graphics<Icon name="pin" size={12} /></PanelHead>
          <Canvas>
            <Part />
            <Brand>
              <BrandName>ANSYS</BrandName>
              <Release>2021 <b>R1</b></Release>
            </Brand>
            <Scale>
              <Marks><Mark>0.00</Mark><Mark>50.00</Mark><EndMark>100.00 (m)</EndMark></Marks>
              <Blocks><span /><span /><span /><span /></Blocks>
              <Marks $inset><Mark>25.00</Mark><Mark>75.00</Mark></Marks>
            </Scale>
            <AxisTriad />
            <Watermark><Han>莫西网</Han><Latin>www.3dmox.com</Latin></Watermark>
          </Canvas>
          <TabStrip>
            <Tab type="button" $active>Model View</Tab>
            <Tab type="button">Print Preview</Tab>
          </TabStrip>
        </View>
      </Workspace>

      <Status>
        <ReadyCell><Icon name="ready" />Ready</ReadyCell>
        <Cell $width={438}>No Selection</Cell>
        <Cell $width={190}><span>Meter</span><span>Degree</span></Cell>
        <Cell $width={55}>0</Cell>
        <Cell $width={55}>0</Cell>
        <Corner viewBox="0 0 21 16" aria-hidden="true"><path d="M7 16L21 2M12 16l9-9M17 16l4-4" stroke="#999" strokeWidth="1.500" /></Corner>
      </Status>
    </Window>
  );
}
